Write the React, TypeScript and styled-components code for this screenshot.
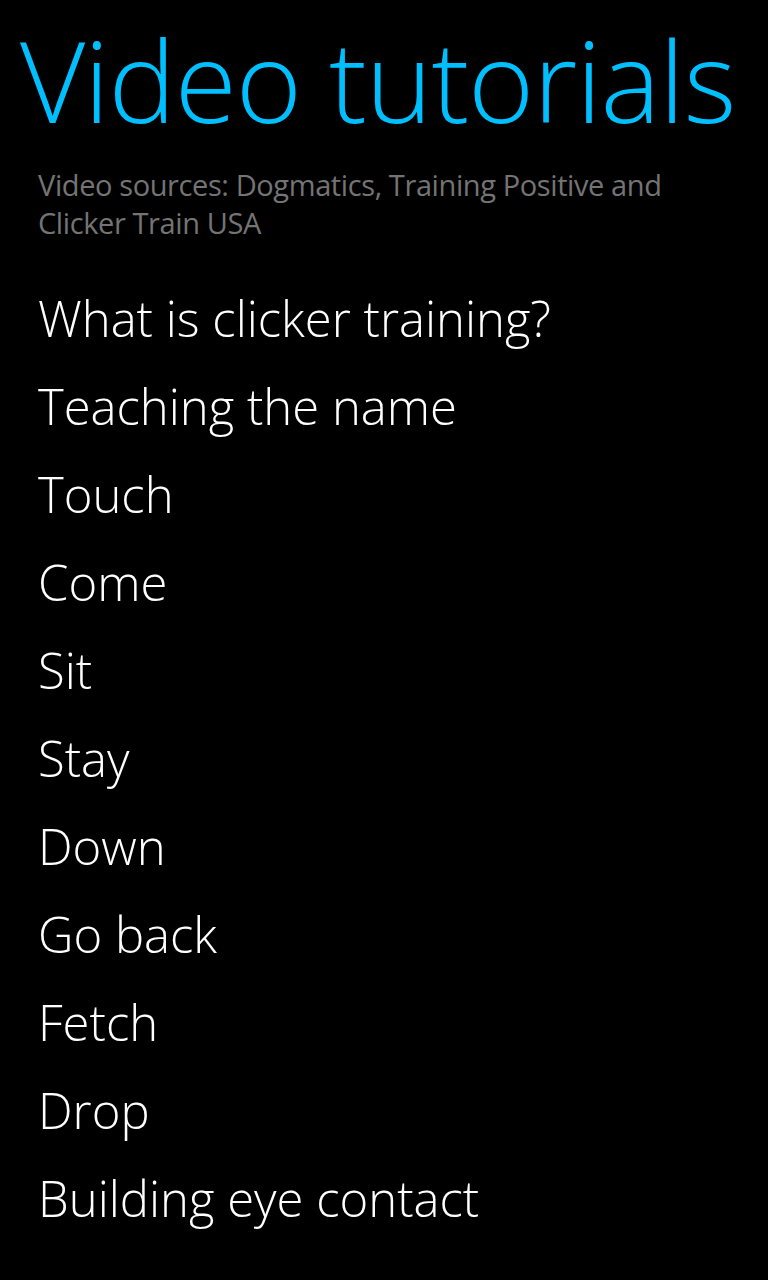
import React from "react";
import styled, { createGlobalStyle } from "styled-components";

const GlobalStyle = createGlobalStyle`
    html, body {
        margin: 0;
        padding: 0;
        background: #000000;
    }
    body {
        font-family: "Open Sans", "Noto Sans", sans-serif;
    }
`;

const Page = styled.div`
    width: 768px;
    min-height: 1280px;
    background: #000000;
    padding-top: 14px;
    box-sizing: border-box;
`;

const Title = styled.h1`
    margin: 0 0 22px 20px;
    font-size: 113px;
    font-weight: 300;
    line-height: 130px;
    letter-spacing: -1.1px;
    color: #00bfff;
    white-space: nowrap;
`;

const Subtitle = styled.p`
    margin: 0 0 32px 38px;
    width: 660px;
    font-size: 29px;
    font-weight: 400;
    line-height: 38px;
    letter-spacing: -0.4px;
    color: #747474;
`;

const List = styled.ul`
    list-style: none;
    margin: 0;
    padding: 0 0 0 38px;
`;

const Item = styled.li`
    font-size: 49px;
    font-weight: 300;
    line-height: 88px;
    color: #ffffff;
    white-space: nowrap;
`;

const tutorials = [
    "What is clicker training?",
    "Teaching the name",
    "Touch",
    "Come",
    "Sit",
    "Stay",
    "Down",
    "Go back",
    "Fetch",
    "Drop",
    "Building eye contact"
];

const App = () => {
    return (
        <Page>
            <GlobalStyle />
            <Title>Video tutorials</Title>
            <Subtitle>
                Video sources: Dogmatics, Training Positive and Clicker Train
                USA
            </Subtitle>
            <List>
                {tutorials.map((t, i) => (
                    <Item key={i}>{t}</Item>
                ))}
            </List>
        </Page>
    );
};

export default App;
